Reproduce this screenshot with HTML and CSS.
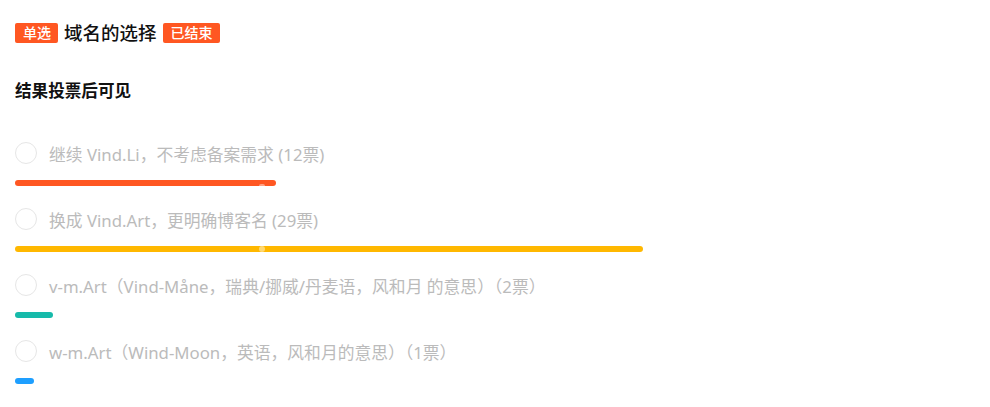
FILE: index.html
```html
<!DOCTYPE html>
<html lang="zh-CN">
<head>
<meta charset="utf-8">
<link rel="stylesheet" href="styles.css">
</head>
<body>
<div class="vote">
  <div class="vote-head">
    <span class="tag">单选</span>
    <span class="vote-title">域名的选择</span>
    <span class="tag">已结束</span>
  </div>
  <div class="vote-tip">结果投票后可见</div>
  <ul class="options">
    <li class="option">
      <div class="option-label"><span class="radio"></span><span class="option-text">继续 Vind.Li，不考虑备案需求 (12票)</span></div>
      <div class="bar bar-red" style="width:261px"><span class="dot dot-low"></span></div>
    </li>
    <li class="option">
      <div class="option-label"><span class="radio"></span><span class="option-text">换成 Vind.Art，更明确博客名 (29票)</span></div>
      <div class="bar bar-orange" style="width:628px"><span class="dot"></span></div>
    </li>
    <li class="option">
      <div class="option-label"><span class="radio"></span><span class="option-text">v-m.Art（Vind-Måne，瑞典/挪威/丹麦语，风和月 的意思）（2票）</span></div>
      <div class="bar bar-green" style="width:38px"></div>
    </li>
    <li class="option">
      <div class="option-label"><span class="radio"></span><span class="option-text">w-m.Art（Wind-Moon，英语，风和月的意思）（1票）</span></div>
      <div class="bar bar-blue" style="width:19px"></div>
    </li>
  </ul>
</div>
</body>
</html>
```

FILE: styles.css
```css
* { box-sizing: border-box; }
html, body { margin: 0; padding: 0; background: #fff; }
body {
  font-family: "Noto Sans", "Noto Sans CJK SC", sans-serif;
  color: #000;
}
.vote { padding: 23px 15px 0 15px; }
.vote-head {
  display: flex;
  align-items: center;
  gap: 5px;
  height: 20px;
}
.tag {
  display: inline-flex;
  align-items: center;
  height: 20px;
  padding: 0 7px 0 8px;
  background: #ff5722;
  color: #fff;
  font-size: 14px;
  font-weight: 500;
  border-radius: 2px;
  line-height: 20px;
}
.vote-title {
  font-size: 18.5px;
  font-weight: 500;
  line-height: 20px;
  color: #111;
  margin: 0 1px;
}
.vote-tip {
  margin-top: 37px;
  font-size: 16.6px;
  font-weight: 700;
  line-height: 22px;
  color: #111;
}
.options {
  list-style: none;
  margin: 40px 0 0 0;
  padding: 0;
  display: flex;
  flex-direction: column;
  gap: 22px;
}
.option-label {
  display: flex;
  align-items: center;
  gap: 12px;
  height: 22px;
}
.radio {
  width: 22px;
  height: 22px;
  border: 1px solid #e6e6e6;
  border-radius: 50%;
  flex: none;
}
.option-text {
  font-size: 16.8px;
  font-weight: 400;
  color: #bbbbbb;
  white-space: nowrap;
  line-height: 22px;
  padding-top: 3px;
}
.bar {
  position: relative;
  margin-top: 16px;
  height: 6px;
  border-radius: 3px;
}
.bar-red { background: #ff5722; }
.bar-orange { background: #ffb800; }
.bar-green { background: #16baaa; }
.bar-blue { background: #1e9fff; }
.dot {
  position: absolute;
  left: 244px;
  top: 0;
  width: 6px;
  height: 6px;
  border-radius: 50%;
  background: rgba(255, 255, 255, 0.45);
}
.dot-low { top: 4px; height: 2px; border-radius: 2px 2px 0 0; }
```
